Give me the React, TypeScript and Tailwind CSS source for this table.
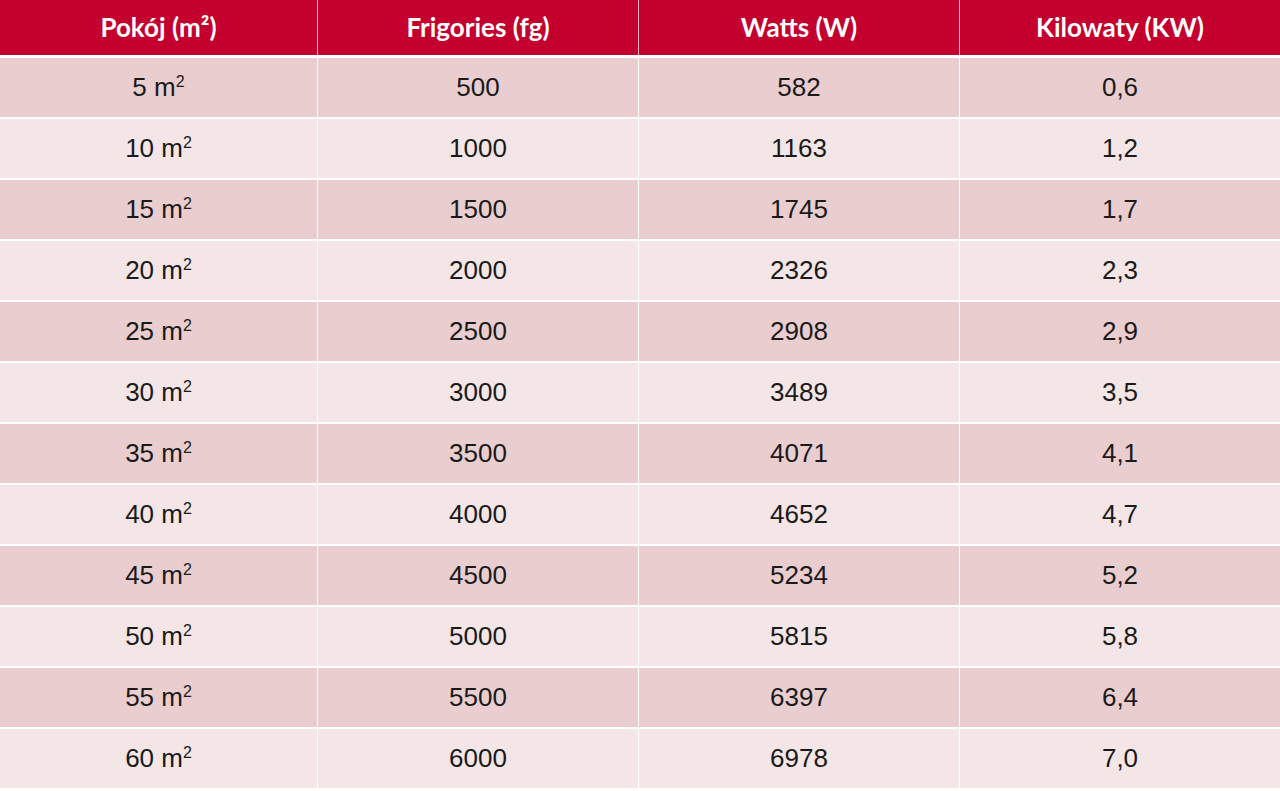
import React from 'react';

const rows = [
  ['5', '500', '582', '0,6'],
  ['10', '1000', '1163', '1,2'],
  ['15', '1500', '1745', '1,7'],
  ['20', '2000', '2326', '2,3'],
  ['25', '2500', '2908', '2,9'],
  ['30', '3000', '3489', '3,5'],
  ['35', '3500', '4071', '4,1'],
  ['40', '4000', '4652', '4,7'],
  ['45', '4500', '5234', '5,2'],
  ['50', '5000', '5815', '5,8'],
  ['55', '5500', '6397', '6,4'],
  ['60', '6000', '6978', '7,0'],
];

const headers = ['Pokój (m²)', 'Frigories (fg)', 'Watts (W)', 'Kilowaty (KW)'];

export default function App() {
  return (
    <div className="w-[1280px] h-[791px] overflow-hidden bg-white">
      {/* Header */}
      <div className="grid grid-cols-[317px_320px_320px_1fr] gap-x-px h-[55px] bg-[#f3b8c4]">
        {headers.map((h) => (
          <div
            key={h}
            className="flex items-center justify-center bg-[#c4002e] text-white text-[26px] font-bold font-['Lato','Open_Sans',sans-serif]"
          >
            {h}
          </div>
        ))}
      </div>

      {/* Body */}
      <div className="flex flex-col gap-[2px] pt-[3px]">
        {rows.map((r, i) => (
          <div key={r[0]} className="grid grid-cols-[317px_320px_320px_1fr] gap-x-px h-[59px]">
            {r.map((cell, j) => (
              <div
                key={j}
                className={`flex items-center justify-center text-[26px] text-[#1a1a1a] font-['Liberation_Sans',Arial,sans-serif] ${
                  i % 2 === 0 ? 'bg-[#e9cdcf]' : 'bg-[#f4e5e6]'
                }`}
              >
                {j === 0 ? (
                  <span>
                    {cell} m<sup className="text-[16px] -top-[9px]">2</sup>
                  </span>
                ) : (
                  cell
                )}
              </div>
            ))}
          </div>
        ))}
      </div>
    </div>
  );
}
